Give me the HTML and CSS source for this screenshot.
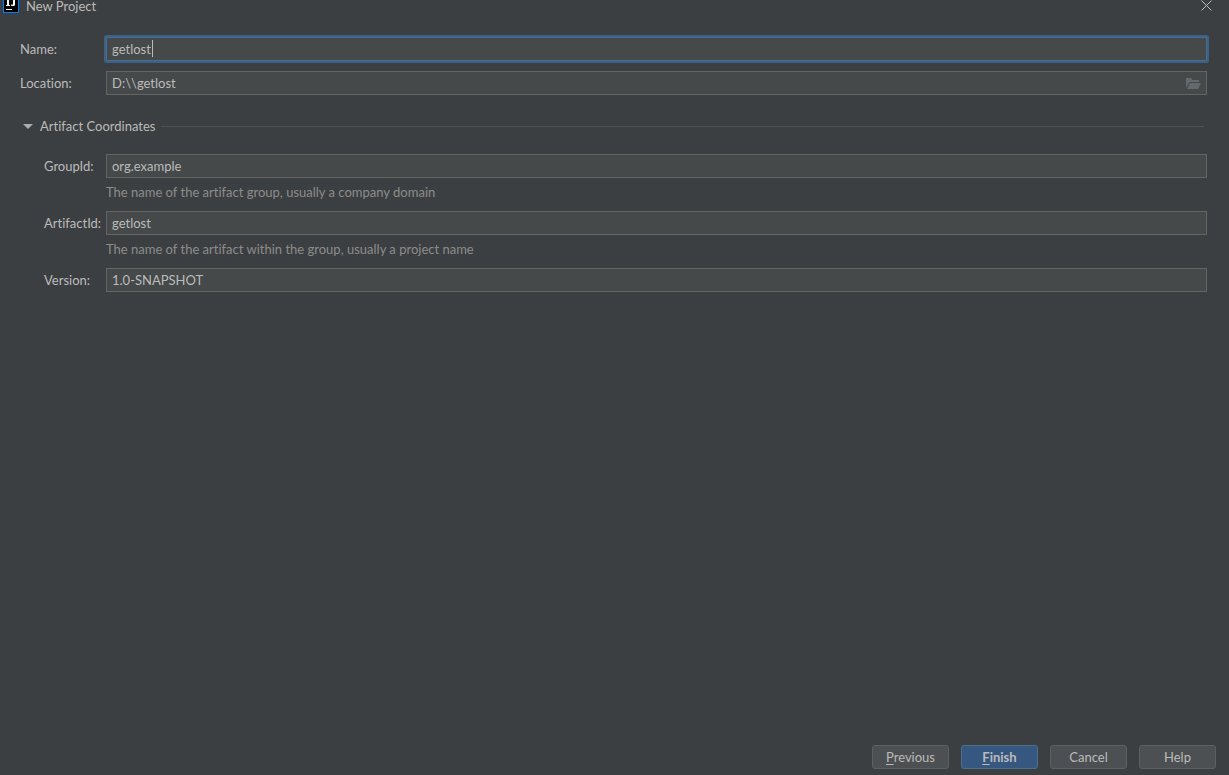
FILE: index.html
```html
<!DOCTYPE html>
<html lang="en">
<head>
<meta charset="utf-8">
<title>New Project</title>
<link rel="stylesheet" href="styles.css">
</head>
<body>
<form class="dialog">
  <header class="titlebar">
    <svg class="logo" width="16" height="13" viewBox="0 0 16 13" aria-hidden="true">
      <rect width="16" height="13" fill="#087cfa"/>
      <rect x="1" width="14" height="12" fill="#000"/>
      <path d="M3 5h1V0h2v5h1v1H3zM8 4.500h1.500L10 5V0h2v5l-1 1H9l-1-.5z" fill="#fff"/>
      <rect x="3" y="9" width="6" height="1" fill="#fff"/>
    </svg>
    <h1 class="title">New Project</h1>
    <button class="close" type="button" aria-label="Close">
      <svg width="11" height="11" viewBox="0 0 11 11"><path d="M.5.5l10 10M10.500.5l-10 10" stroke="#bbb" fill="none"/></svg>
    </button>
  </header>
  <main class="content">
    <div class="row">
      <label class="label" for="name">Name:</label>
      <div class="field">
        <input class="input focused" id="name" type="text" value="getlost">
        <span class="caret"></span>
      </div>
    </div>
    <div class="row">
      <label class="label" for="location">Location:</label>
      <div class="field">
        <input class="input" id="location" type="text" value="D:\\getlost">
        <button class="browse" type="button" aria-label="Browse">
          <svg width="15" height="11" viewBox="0 0 15 11"><path d="M0 0h5l1.500 2H13v2H3.500L0 10z" fill="#63696c"/><path d="M4 5h11l-3 6H1z" fill="#63696c"/></svg>
        </button>
      </div>
    </div>
    <section class="section">
      <button class="section-head" type="button" aria-expanded="true">
        <svg width="10" height="5" viewBox="0 0 10 5"><path d="M0 0h10L5 5z" fill="#adadad"/></svg>
        <span>Artifact Coordinates</span>
        <span class="rule"></span>
      </button>
      <div class="row nested">
        <label class="label" for="group">GroupId:</label>
        <div class="field"><input class="input" id="group" type="text" value="org.example"></div>
      </div>
      <p class="hint">The name of the artifact group, usually a company domain</p>
      <div class="row nested">
        <label class="label" for="artifact">ArtifactId:</label>
        <div class="field"><input class="input" id="artifact" type="text" value="getlost"></div>
      </div>
      <p class="hint">The name of the artifact within the group, usually a project name</p>
      <div class="row nested">
        <label class="label" for="version">Version:</label>
        <div class="field"><input class="input" id="version" type="text" value="1.0-SNAPSHOT"></div>
      </div>
    </section>
  </main>
  <footer class="actions">
    <button class="button" type="button"><u>P</u>revious</button>
    <button class="button primary" type="submit"><u>F</u>inish</button>
    <button class="button" type="button">Cancel</button>
    <button class="button" type="button">Help</button>
  </footer>
</form>
</body>
</html>
```
FILE: styles.css
```css
* { box-sizing: border-box; }
body {
  margin: 0;
  background: #3c3f41;
  color: #bbb;
  font: 13px/20px Lato, "Noto Sans", sans-serif;
  font-variant-ligatures: none;
}
button, input { font: inherit; font-variant-ligatures: none; color: inherit; }
button { padding: 0; border: 0; background: none; }
svg { display: block; flex: none; }

.dialog { display: flex; flex-direction: column; min-height: 100vh; }

.titlebar { display: flex; height: 13px; padding: 0 17px 0 3px; }
.title { flex: 1; margin: 0 0 0 7px; font-size: 13px; font-weight: 400; line-height: 13px; }
.close { display: flex; height: 11px; }

.content { flex: 1; padding: 24px 22px 0 20px; }
.row { display: flex; align-items: center; margin-bottom: 10px; }
.label { width: 86px; flex: none; white-space: nowrap; }
.field { position: relative; flex: 1; display: flex; }
.input {
  width: 100%;
  height: 24px;
  padding: 0 5px 1px;
  border: 1px solid #646464;
  border-radius: 0;
  background: #45494a;
  outline: 0;
}
.input.focused { border-color: #466d94; box-shadow: 0 0 0 2px #3d6185; border-radius: 1px; }
.caret { position: absolute; left: 46px; top: 3px; width: 1px; height: 17px; background: #bbb; }
.browse { position: absolute; right: 6px; top: 7px; }

.section { padding-top: 11px; }
.section-head {
  display: flex;
  align-items: center;
  width: 100%;
  height: 20px;
  margin-bottom: 18px;
  padding: 0 3px 0 3px;
}
.section-head svg { margin-right: 7px; }
.rule { flex: 1; height: 1px; margin-left: 6px; background: #515151; }
.nested { margin-bottom: 4px; padding-left: 24px; }
.nested .label { width: 62px; }
.hint { margin: 0 0 9px 86px; color: #8c8c8c; }

.actions { display: flex; justify-content: flex-end; gap: 12px; padding: 0 13px 6px; }
.button {
  width: 77px;
  height: 24px;
  border: 1px solid #5e6060;
  border-radius: 3px;
  background: #4c5052;
  line-height: 22px;
}
.button u { text-underline-offset: 2px; }
.primary { border-color: #4c708c; background: #365880; font-weight: 700; }
```
